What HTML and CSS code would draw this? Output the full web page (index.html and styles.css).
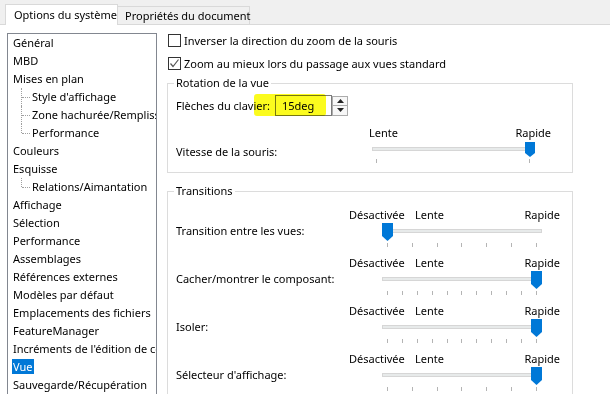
FILE: index.html
```html
<!doctype html>
<html>
	<head>
		<meta charset="utf-8">
		<title>Options du système</title>
		<link rel="stylesheet" href="styles.css">
	</head>
	<body>
		<div class="tabs">
			<div class="tab active">Options du système</div>
			<div class="tab">Propriétés du document</div>
		</div>
		<div class="page">
			<div class="tree">
				<div class="item">Général</div>
				<div class="item">MBD</div>
				<div class="item">Mises en plan</div>
				<div class="item child">Style d'affichage</div>
				<div class="item child">Zone hachurée/Remplissage</div>
				<div class="item child last">Performance</div>
				<div class="item">Couleurs</div>
				<div class="item">Esquisse</div>
				<div class="item child last">Relations/Aimantation</div>
				<div class="item">Affichage</div>
				<div class="item">Sélection</div>
				<div class="item">Performance</div>
				<div class="item">Assemblages</div>
				<div class="item">Références externes</div>
				<div class="item">Modèles par défaut</div>
				<div class="item">Emplacements des fichiers</div>
				<div class="item">FeatureManager</div>
				<div class="item">Incréments de l'édition de cotes</div>
				<div class="item"><span class="selected">Vue</span></div>
				<div class="item">Sauvegarde/Récupération</div>
			</div>
			<div class="options">
				<div class="check"><span class="box"></span>Inverser la direction du zoom de la souris</div>
				<div class="check">
					<span class="box"><svg width="11" height="11" viewBox="0 0 11 11"><polyline points="1.5,5.5 4,8.5 9.5,1.5" fill="none" stroke="#555" stroke-width="1.2"/></svg></span>Zoom au mieux lors du passage aux vues standard
				</div>
				<fieldset class="group">
					<legend>Rotation de la vue</legend>
					<div class="field">
						<span class="field-label">Flèches du clavier:</span>
						<span class="input">15deg</span>
						<span class="spin">
							<span class="spin-btn"><svg width="7" height="4" viewBox="0 0 7 4"><polygon points="0,4 7,4 3.5,0" fill="#222"/></svg></span>
							<span class="spin-btn"><svg width="7" height="4" viewBox="0 0 7 4"><polygon points="0,0 7,0 3.5,4" fill="#222"/></svg></span>
						</span>
						<span class="marker"></span>
					</div>
					<div class="row speed">
						<div class="row-label">Vitesse de la souris:</div>
						<div class="slider small">
							<div class="scale"><span>Lente</span><span class="fast">Rapide</span></div>
							<div class="track-area">
								<div class="track"></div>
								<svg class="thumb" style="left:156px" width="10" height="15" viewBox="0 0 10 15"><polygon points="0,0 10,0 10,11 5,15 0,11" fill="#0078d7"/></svg>
							</div>
							<div class="ticks"><i></i><i></i></div>
						</div>
					</div>
				</fieldset>
				<fieldset class="group transitions">
					<legend>Transitions</legend>
					<div class="row">
						<div class="row-label">Transition entre les vues:</div>
						<div class="slider">
							<div class="scale"><span class="off">Désactivée</span><span>Lente</span><span class="fast">Rapide</span></div>
							<div class="track-area">
								<div class="track"></div>
								<svg class="thumb" style="left:33px" width="11" height="18" viewBox="0 0 11 18"><polygon points="0,0 11,0 11,13 5.5,18 0,13" fill="#0078d7"/></svg>
							</div>
							<div class="ticks"><i></i><i></i><i></i><i></i><i></i><i></i><i></i></div>
						</div>
					</div>
					<div class="row">
						<div class="row-label">Cacher/montrer le composant:</div>
						<div class="slider">
							<div class="scale"><span class="off">Désactivée</span><span>Lente</span><span class="fast">Rapide</span></div>
							<div class="track-area">
								<div class="track"></div>
								<svg class="thumb" style="left:182px" width="11" height="18" viewBox="0 0 11 18"><polygon points="0,0 11,0 11,13 5.5,18 0,13" fill="#0078d7"/></svg>
							</div>
							<div class="ticks"><i></i><i></i><i></i><i></i><i></i><i></i><i></i><i></i><i></i><i></i><i></i></div>
						</div>
					</div>
					<div class="row">
						<div class="row-label">Isoler:</div>
						<div class="slider">
							<div class="scale"><span class="off">Désactivée</span><span>Lente</span><span class="fast">Rapide</span></div>
							<div class="track-area">
								<div class="track"></div>
								<svg class="thumb" style="left:182px" width="11" height="18" viewBox="0 0 11 18"><polygon points="0,0 11,0 11,13 5.5,18 0,13" fill="#0078d7"/></svg>
							</div>
							<div class="ticks"><i></i><i></i><i></i><i></i><i></i><i></i><i></i><i></i><i></i><i></i><i></i></div>
						</div>
					</div>
					<div class="row">
						<div class="row-label">Sélecteur d'affichage:</div>
						<div class="slider">
							<div class="scale"><span class="off">Désactivée</span><span>Lente</span><span class="fast">Rapide</span></div>
							<div class="track-area">
								<div class="track"></div>
								<svg class="thumb" style="left:182px" width="11" height="18" viewBox="0 0 11 18"><polygon points="0,0 11,0 11,13 5.5,18 0,13" fill="#0078d7"/></svg>
							</div>
							<div class="ticks"><i></i><i></i><i></i><i></i><i></i><i></i><i></i></div>
						</div>
					</div>
				</fieldset>
			</div>
		</div>
	</body>
</html>
```

FILE: styles.css
```css
* {
	margin: 0;
	padding: 0;
	box-sizing: border-box;
}
body {
	width: 610px;
	height: 394px;
	overflow: hidden;
	background: #fff;
	color: #000;
	font-family: "Noto Sans", "Open Sans", sans-serif;
	font-size: 11px;
}
.tabs {
	display: flex;
	align-items: flex-end;
	height: 25px;
	padding-left: 5px;
	background: #f0f0f0;
	border-bottom: 1px solid #d9d9d9;
}
.tab {
	width: 133px;
	height: 18px;
	line-height: 17px;
	padding-left: 7px;
	border: 1px solid #d9d9d9;
	border-bottom: none;
	background: #f0f0f0;
	white-space: nowrap;
}
.tab.active {
	position: relative;
	width: 113px;
	height: 21px;
	line-height: 19px;
	padding-left: 8px;
	margin-bottom: -1px;
	margin-right: -1px;
	background: #fff;
}
.page {
	display: flex;
	padding-left: 7px;
}
.tree {
	width: 150px;
	height: 380px;
	margin-top: 8px;
	border: 1px solid #828790;
	overflow: hidden;
	white-space: nowrap;
}
.item {
	line-height: 18px;
	padding-left: 5px;
}
.item.child {
	position: relative;
	padding-left: 24px;
}
.item.child::before {
	content: "";
	position: absolute;
	left: 13px;
	top: 0;
	bottom: 0;
	border-left: 1px dotted #a0a0a0;
}
.item.child.last::before {
	bottom: 9px;
}
.item.child::after {
	content: "";
	position: absolute;
	left: 14px;
	top: 9px;
	width: 8px;
	border-top: 1px dotted #a0a0a0;
}
.selected {
	display: inline-block;
	margin-left: -1px;
	padding: 0 1px;
	line-height: 15px;
	background: #0078d7;
	color: #fff;
}
.options {
	width: 406px;
	margin-left: 10px;
	padding-top: 4px;
}
.check {
	display: flex;
	align-items: center;
	height: 23px;
	white-space: nowrap;
}
.box {
	display: flex;
	align-items: center;
	justify-content: center;
	width: 13px;
	height: 13px;
	margin: 0 3px 0 1px;
	border: 1px solid #333;
}
.group {
	border: 1px solid #dcdcdc;
	padding: 0 8px 9px;
}
.group legend {
	margin-left: -2px;
	padding: 0 2px;
	line-height: 16px;
}
.transitions {
	margin-top: 10px;
	height: 230px;
	padding-top: 8px;
}
.field {
	position: relative;
	display: flex;
	align-items: center;
	height: 21px;
	margin-top: 4px;
}
.field-label {
	width: 99px;
}
.input {
	width: 57px;
	height: 21px;
	line-height: 19px;
	padding-left: 6px;
	border: 1px solid #7a7a7a;
}
.spin {
	display: flex;
	flex-direction: column;
	width: 16px;
	height: 20px;
	border: 1px solid #acacac;
	background: #f7f7f7;
}
.spin-btn {
	display: flex;
	align-items: center;
	justify-content: center;
	flex: 1;
}
.spin-btn + .spin-btn {
	border-top: 1px solid #acacac;
}
.marker {
	position: absolute;
	left: 78px;
	top: -1px;
	width: 72px;
	height: 22px;
	border-radius: 3px;
	background: #fbfb1e;
	mix-blend-mode: multiply;
}
.row {
	display: flex;
	height: 48px;
}
.row-label {
	width: 173px;
	padding-top: 16px;
	line-height: 16px;
	white-space: nowrap;
}
.speed {
	height: 38px;
	margin-top: 9px;
}
.speed .row-label {
	width: 193px;
	padding-top: 19px;
}
.slider {
	width: 211px;
}
.slider.small {
	width: 182px;
}
.scale {
	display: flex;
	line-height: 16px;
	white-space: nowrap;
}
.scale .off {
	width: 66px;
}
.scale .fast {
	margin-left: auto;
}
.track-area {
	position: relative;
	height: 19px;
	padding-top: 6px;
}
.small .track-area {
	height: 16px;
}
.track {
	width: 160px;
	height: 4px;
	margin-left: 33px;
	border: 1px solid #d6d6d6;
	background: #e7eaea;
}
.small .track {
	width: 159px;
	margin-left: 3px;
}
.thumb {
	position: absolute;
	top: 0;
	display: block;
}
.small .thumb {
	top: 1px;
}
.ticks {
	display: flex;
	justify-content: space-between;
	width: 150px;
	height: 4px;
	margin: 1px 0 0 38px;
}
.small .ticks {
	width: 154px;
	margin: 2px 0 0 7px;
}
.ticks i {
	width: 1px;
	height: 4px;
	background: #b4b4b4;
}
```
